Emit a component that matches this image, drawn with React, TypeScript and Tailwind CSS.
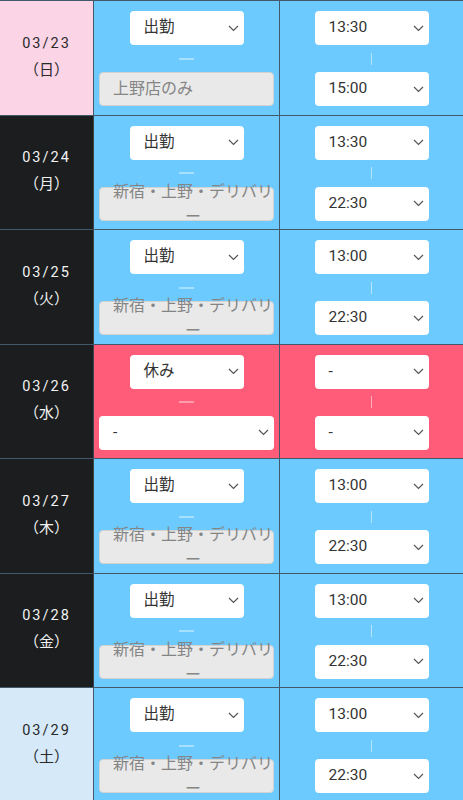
import React from "react";

type Row = {
  date: string;
  day: string;
  dateTone: "pink" | "dark" | "sky";
  off?: boolean;
  status: string;
  shop: string;
  start: string;
  end: string;
};

const rows: Row[] = [
  { date: "03/23", day: "（日）", dateTone: "pink", status: "出勤", shop: "上野店のみ", start: "13:30", end: "15:00" },
  { date: "03/24", day: "（月）", dateTone: "dark", status: "出勤", shop: "新宿・上野・デリバリー", start: "13:30", end: "22:30" },
  { date: "03/25", day: "（火）", dateTone: "dark", status: "出勤", shop: "新宿・上野・デリバリー", start: "13:00", end: "22:30" },
  { date: "03/26", day: "（水）", dateTone: "dark", off: true, status: "休み", shop: "-", start: "-", end: "-" },
  { date: "03/27", day: "（木）", dateTone: "dark", status: "出勤", shop: "新宿・上野・デリバリー", start: "13:00", end: "22:30" },
  { date: "03/28", day: "（金）", dateTone: "dark", status: "出勤", shop: "新宿・上野・デリバリー", start: "13:00", end: "22:30" },
  { date: "03/29", day: "（土）", dateTone: "sky", status: "出勤", shop: "新宿・上野・デリバリー", start: "13:00", end: "22:30" },
];

const dateTones = {
  pink: "bg-[#fbd4e6] text-[#2a2a2a] border-[#42596b]",
  dark: "bg-[#1b1d1f] text-[#f2f2f2] border-[#3c4349]",
  sky: "bg-[#d5e9f8] text-[#2a2a2a] border-[#42596b]",
};

function Chevron() {
  return (
    <svg width="11" height="7" viewBox="0 0 11 7" className="shrink-0">
      <path d="M1 1l4.5 4.5L10 1" fill="none" stroke="#555" strokeWidth="1.2" />
    </svg>
  );
}

function Select({ value, wide }: { value: string; wide?: boolean }) {
  return (
    <div
      className={`flex h-[34px] items-center justify-between rounded-[4px] bg-white pl-[14px] pr-[5px] text-[15.5px] text-[#333] ${
        wide ? "w-[175px]" : "w-[114px]"
      }`}
    >
      <span>{value}</span>
      <Chevron />
    </div>
  );
}

function ShopBox({ value }: { value: string }) {
  const wrapped = value.length > 8;
  return (
    <div className="flex h-[34px] w-[175px] items-center rounded-[4px] border border-[#d2d2d2] bg-[#e9e9e9] pl-[13px] pr-0 text-[16px] text-[#858585]">
      {wrapped ? (
        <div className="w-[160px] whitespace-nowrap text-center leading-[25px]">
          {value.slice(0, -1)}
          <br />
          {value.slice(-1)}
        </div>
      ) : (
        <span>{value}</span>
      )}
    </div>
  );
}

export default function App() {
  return (
    <div
      className="h-[800px] w-[463px] overflow-hidden bg-[#6ccaff]"
      style={{ fontFamily: "Roboto, 'Noto Sans CJK JP', sans-serif" }}
    >
      {rows.map((row) => {
        const bg = row.off ? "bg-[#ff5c7a]" : "bg-[#6ccaff]";
        return (
          <div key={row.date} className="grid h-[114.5px] grid-cols-[94px_186px_1fr] border-t border-[#42596b]">
            <div
              className={`flex flex-col items-center justify-center border-r pb-[2px] leading-[27px] ${dateTones[row.dateTone]}`}
            >
              <span className="text-[14.5px] tracking-[2px]">{row.date}</span>
              <span className="text-[15px]">{row.day}</span>
            </div>
            <div className={`flex flex-col items-center border-r border-[#42596b] pt-[10px] ${bg}`}>
              <Select value={row.status} />
              <div className="flex h-[27px] items-center justify-center">
                <div className="h-[2px] w-[15px] bg-white/40" />
              </div>
              {row.off ? <Select value={row.shop} wide /> : <ShopBox value={row.shop} />}
            </div>
            <div className={`flex flex-col items-center pt-[10px] ${bg}`}>
              <Select value={row.start} />
              <div className="flex h-[27px] items-center justify-center">
                <div className="h-[12px] w-[1.5px] bg-white/50" />
              </div>
              <Select value={row.end} />
            </div>
          </div>
        );
      })}
    </div>
  );
}
